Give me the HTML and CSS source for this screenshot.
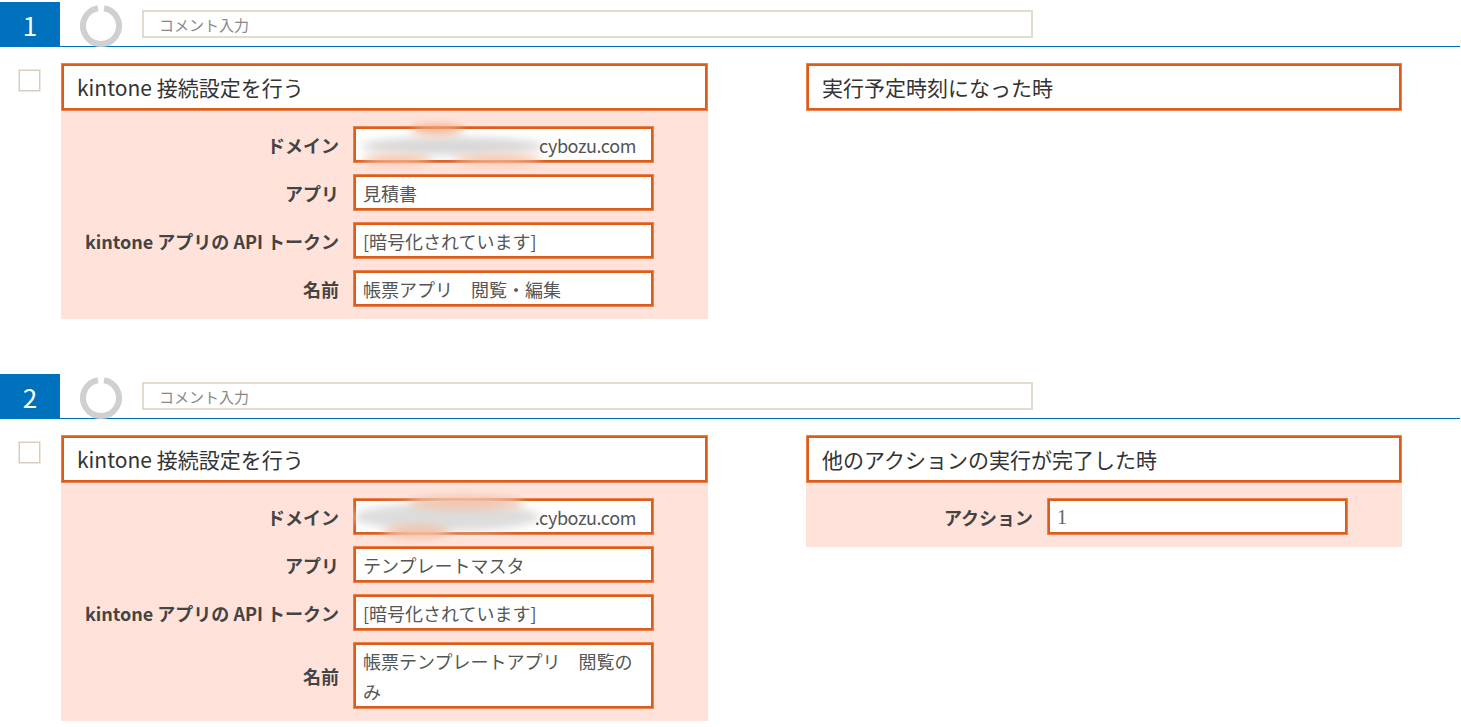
FILE: index.html
```html
<!DOCTYPE html>
<html lang="ja">
<head>
<meta charset="utf-8">
<title>kintone</title>
<link rel="stylesheet" href="styles.css">
</head>
<body>
<section class="step">
  <header class="step-head">
    <div class="step-num">1</div>
    <svg class="ring" width="42" height="42" viewBox="0 0 42 42"><path d="M24 3.25A18 18 0 1 1 18 3.25" fill="none" stroke="#d0d0d0" stroke-width="6"/></svg>
    <div class="comment">コメント入力</div>
  </header>
  <div class="step-body">
    <div class="check"></div>
    <div class="card card-left">
      <div class="card-title">kintone 接続設定を行う</div>
      <div class="card-panel">
        <div class="row"><div class="label">ドメイン</div><div class="field field-domain"><span class="blur blur-a"></span><span class="blur blur-b"></span><span class="blur blur-c"></span><span class="blur blur-c2"></span><span class="domain-text">cybozu.com</span></div></div>
        <div class="row"><div class="label">アプリ</div><div class="field">見積書</div></div>
        <div class="row"><div class="label">kintone アプリの API トークン</div><div class="field">[暗号化されています]</div></div>
        <div class="row"><div class="label">名前</div><div class="field">帳票アプリ　閲覧・編集</div></div>
      </div>
    </div>
    <div class="card card-right">
      <div class="card-title">実行予定時刻になった時</div>
    </div>
  </div>
</section>
<section class="step step-second">
  <header class="step-head">
    <div class="step-num">2</div>
    <svg class="ring" width="42" height="42" viewBox="0 0 42 42"><path d="M24 3.25A18 18 0 1 1 18 3.25" fill="none" stroke="#d0d0d0" stroke-width="6"/></svg>
    <div class="comment">コメント入力</div>
  </header>
  <div class="step-body">
    <div class="check"></div>
    <div class="card card-left">
      <div class="card-title">kintone 接続設定を行う</div>
      <div class="card-panel">
        <div class="row"><div class="label">ドメイン</div><div class="field field-domain"><span class="blur blur-d"></span><span class="blur blur-e"></span><span class="blur blur-f"></span><span class="domain-text">.cybozu.com</span></div></div>
        <div class="row"><div class="label">アプリ</div><div class="field">テンプレートマスタ</div></div>
        <div class="row"><div class="label">kintone アプリの API トークン</div><div class="field">[暗号化されています]</div></div>
        <div class="row"><div class="label">名前</div><div class="field">帳票テンプレートアプリ　閲覧のみ</div></div>
      </div>
    </div>
    <div class="card card-right">
      <div class="card-title">他のアクションの実行が完了した時</div>
      <div class="card-panel panel-right">
        <div class="row"><div class="label">アクション</div><div class="field field-num">1</div></div>
      </div>
    </div>
  </div>
</section>
</body>
</html>
```
FILE: styles.css
```css
* { box-sizing: border-box; }
html, body { margin: 0; padding: 0; background: #fff; overflow: hidden; }
body {
  width: 1461px;
  height: 727px;
  padding-top: 2px;
  font-family: "Noto Sans CJK JP", "Noto Sans", sans-serif;
  color: #444;
}
.step-second { margin-top: 55px; }
.step-head {
  display: flex;
  align-items: center;
  width: 1460px;
  height: 45px;
  border-bottom: 1px solid #0071bc;
}
.step-num {
  width: 60px;
  height: 44px;
  background: #0071bc;
  color: #fff;
  font-size: 26px;
  line-height: 46px;
  text-align: center;
}
.ring {
  flex: none;
  margin-left: 20px;
  margin-top: 3px;
}
.comment {
  width: 891px;
  height: 28px;
  margin-left: 20px;
  padding-left: 15px;
  border: 2px solid #e3dbd0;
  font-size: 15px;
  line-height: 25px;
  color: #888;
}
.step-body {
  display: flex;
  align-items: flex-start;
  padding-top: 16px;
}
.check {
  width: 23px;
  height: 23px;
  margin: 6px 0 0 18px;
  border: 1px solid #efe8df;
  box-shadow: inset 0 0 0 1px #d9ccbc;
}
.card-left { width: 647px; margin-left: 20px; }
.card-right { width: 596px; margin-left: 98px; }
.card-title {
  height: 48px;
  padding-left: 15px;
  border: 1px solid #e8824f;
  box-shadow: inset 0 0 0 2px #dd5c1a;
  background: #fff;
  font-size: 21px;
  line-height: 46px;
  color: #333;
}
.card-panel {
  display: flex;
  flex-direction: column;
  gap: 11px;
  padding: 15px 0 12px;
  background: #ffe3db;
}
.row { display: flex; align-items: center; }
.label {
  width: 278px;
  flex: none;
  margin-right: 14px;
  font-size: 18px;
  font-weight: 700;
  line-height: 26px;
  padding-top: 1px;
  text-align: right;
  color: #444;
  white-space: nowrap;
}
.panel-right .label { width: 227px; }
.field {
  position: relative;
  width: 301px;
  min-height: 37px;
  padding: 3px 8px 2px 9px;
  border: 1px solid #e8824f;
  box-shadow: inset 0 0 0 2px #dd5c1a;
  background: #fff;
  font-size: 18px;
  line-height: 30px;
  color: #555;
}
.field-domain { text-align: right; padding-right: 17px; }
.domain-text { position: relative; letter-spacing: -0.4px; }
.field-num { font-family: "Liberation Serif", serif; font-size: 20px; color: #666; }
.blur {
  position: absolute;
  border-radius: 50%;
  filter: blur(4px);
}
.blur-a { left: 7px; top: 10px; width: 182px; height: 18px; background: #d8d8d8; }
.blur-b { left: 57px; top: -2px; width: 52px; height: 9px; background: #f4a87f; }
.blur-c { left: 8px; top: 28px; width: 70px; height: 9px; background: #f4bda0; }
.blur-c2 { left: 100px; top: 28px; width: 88px; height: 9px; background: #f4bda0; }
.blur-d { left: 0; top: 4px; width: 186px; height: 28px; background: #dddddd; }
.blur-e { left: 54px; top: -3px; width: 116px; height: 14px; background: #f0c4ad; }
.blur-f { left: 30px; top: 26px; width: 66px; height: 13px; background: #f0bfa5; }
```
